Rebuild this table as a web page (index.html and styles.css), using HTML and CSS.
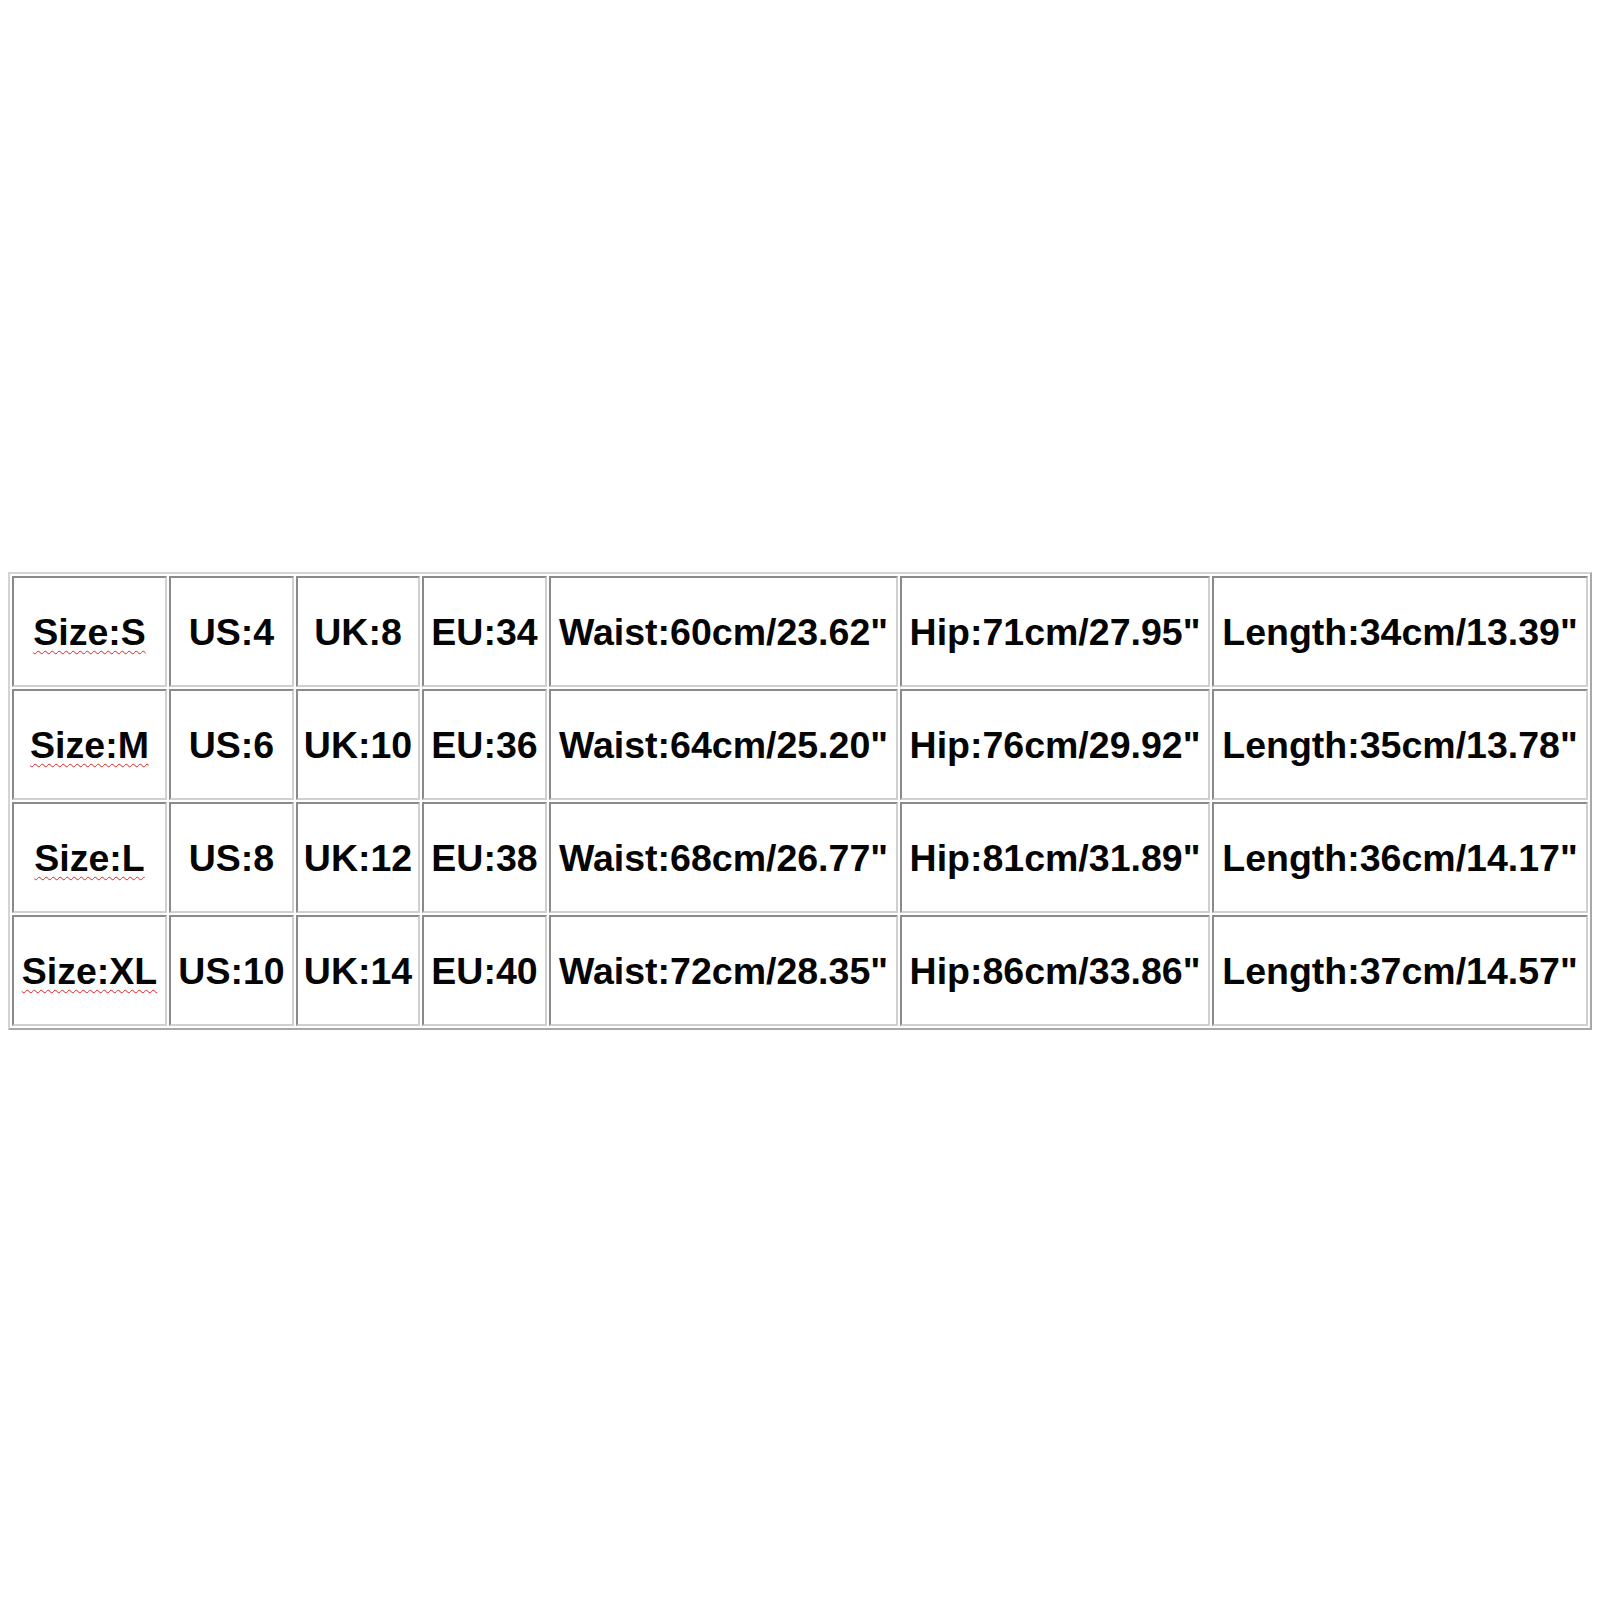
FILE: index.html
```html
<!DOCTYPE html>
<html>
<head>
<meta charset="utf-8">
<link rel="stylesheet" href="styles.css">
</head>
<body>
<div class="page">
<table class="chart">
<colgroup>
<col class="c1"><col class="c2"><col class="c3"><col class="c4"><col class="c5"><col class="c6"><col class="c7">
</colgroup>
<tr><td><span class="spell">Size:S</span></td><td>US:4</td><td>UK:8</td><td>EU:34</td><td>Waist:60cm/23.62"</td><td>Hip:71cm/27.95"</td><td>Length:34cm/13.39"</td></tr>
<tr><td><span class="spell">Size:M</span></td><td>US:6</td><td>UK:10</td><td>EU:36</td><td>Waist:64cm/25.20"</td><td>Hip:76cm/29.92"</td><td>Length:35cm/13.78"</td></tr>
<tr><td><span class="spell">Size:L</span></td><td>US:8</td><td>UK:12</td><td>EU:38</td><td>Waist:68cm/26.77"</td><td>Hip:81cm/31.89"</td><td>Length:36cm/14.17"</td></tr>
<tr><td><span class="spell">Size:XL</span></td><td>US:10</td><td>UK:14</td><td>EU:40</td><td>Waist:72cm/28.35"</td><td>Hip:86cm/33.86"</td><td>Length:37cm/14.57"</td></tr>
</table>
</div>
</body>
</html>
```
FILE: styles.css
```css
html, body {
  margin: 0;
  padding: 0;
  background: #ffffff;
}
.page {
  padding: 572px 0 0 8px;
}
.chart {
  table-layout: fixed;
  width: 1584px;
  border-collapse: separate;
  border-spacing: 2px;
  border: 2px solid;
  border-color: #d4d4d4 #a8a8a8 #a8a8a8 #d4d4d4;
  font-family: "Liberation Sans", Arial, sans-serif;
  font-weight: bold;
  font-size: 37.5px;
  color: #050505;
}
.c1 { width: 155px; }
.c2 { width: 125px; }
.c3 { width: 124px; }
.c4 { width: 125px; }
.c5 { width: 349px; }
.c6 { width: 310px; }
.c7 { width: 376px; }
.chart td {
  height: 111px;
  box-sizing: border-box;
  padding: 2px 0 0 0;
  border: 2px solid;
  border-color: #8a8a8a #d0d0d0 #d0d0d0 #8a8a8a;
  text-align: center;
  vertical-align: middle;
  white-space: nowrap;
  overflow: visible;
}
.spell {
  text-decoration: underline wavy #d22;
  text-decoration-thickness: 1px;
  text-underline-offset: 5px;
}
```
